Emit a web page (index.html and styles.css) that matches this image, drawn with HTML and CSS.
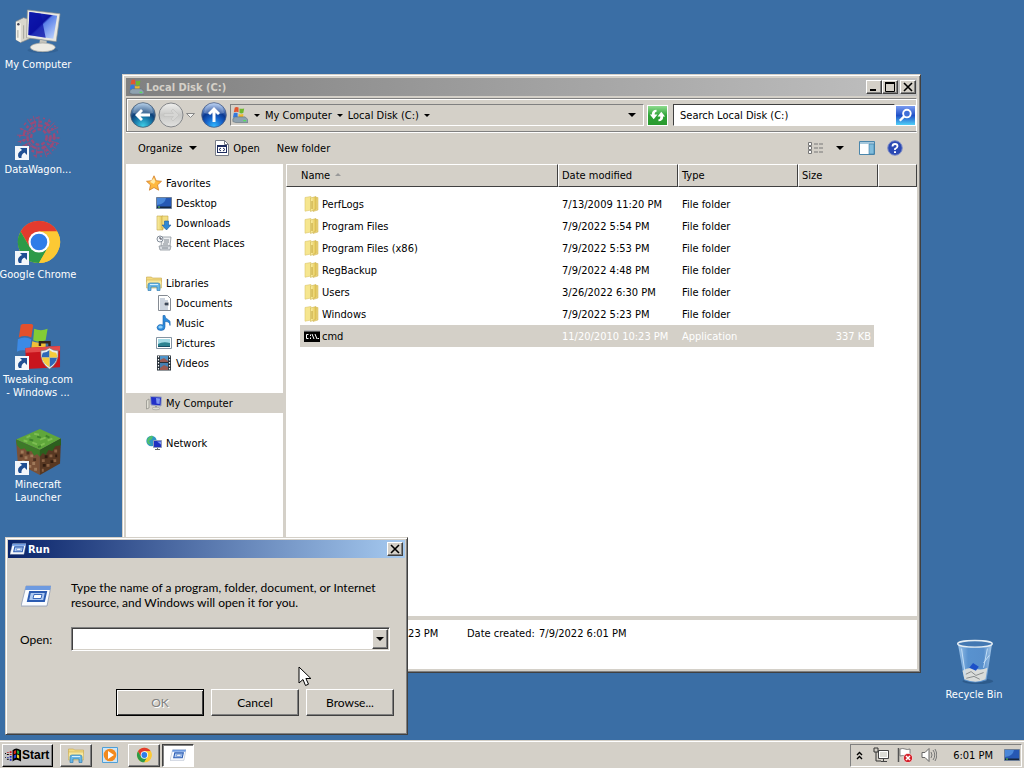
FILE: index.html
```html
<!DOCTYPE html>
<html lang="en">
<head>
  <meta charset="UTF-8" />
  <meta name="viewport" content="width=device-width, initial-scale=1.0"/>
  <title>Desktop</title>
  <link rel="stylesheet" href="styles.css">
</head>
<body>

  <!-- shared icons -->
  <svg class="sprite" aria-hidden="true">
    <defs>
      <linearGradient id="g-screen" x1="0" y1="0" x2="1" y2="1">
        <stop offset="0" stop-color="#1a35c8"/><stop offset=".45" stop-color="#0a12a0"/><stop offset=".5" stop-color="#5a80e8"/><stop offset="1" stop-color="#c8dcff"/>
      </linearGradient>
      <linearGradient id="g-folder" x1="0" y1="0" x2="1" y2="0">
        <stop offset="0" stop-color="#fbf1a8"/><stop offset="1" stop-color="#e2c350"/>
      </linearGradient>
      <radialGradient id="g-back" cx=".5" cy=".95" r=".9">
        <stop offset="0" stop-color="#3fd0e8"/><stop offset=".4" stop-color="#1878a8"/><stop offset=".65" stop-color="#0d3f78"/><stop offset="1" stop-color="#8fb4d8"/>
      </radialGradient>
      <radialGradient id="g-up" cx=".5" cy=".95" r=".9">
        <stop offset="0" stop-color="#30b8ff"/><stop offset=".4" stop-color="#1560c8"/><stop offset=".65" stop-color="#0b3890"/><stop offset="1" stop-color="#98b8e8"/>
      </radialGradient>
      <linearGradient id="g-grey" x1="0" y1="0" x2="0" y2="1">
        <stop offset="0" stop-color="#f0f0ee"/><stop offset=".5" stop-color="#c8c8c6"/><stop offset="1" stop-color="#e2e2e0"/>
      </linearGradient>
      <linearGradient id="g-green" x1="0" y1="0" x2="0" y2="1">
        <stop offset="0" stop-color="#8fdc8f"/><stop offset=".5" stop-color="#2ea336"/><stop offset="1" stop-color="#2a9a2e"/>
      </linearGradient>
      <linearGradient id="g-find" x1="0" y1="0" x2="0" y2="1">
        <stop offset="0" stop-color="#7a9cf0"/><stop offset=".5" stop-color="#2050c8"/><stop offset="1" stop-color="#50d0f8"/>
      </linearGradient>
      <linearGradient id="g-glass" x1="0" y1="0" x2="1" y2="0">
        <stop offset="0" stop-color="#a8cdf0"/><stop offset=".3" stop-color="#5c96d4"/><stop offset=".75" stop-color="#5a92d0"/><stop offset="1" stop-color="#b8d6f2"/>
      </linearGradient>
    </defs>

    <symbol id="i-computer" viewBox="0 0 48 48">
      <ellipse cx="29" cy="43" rx="16" ry="3" fill="#2b527f" opacity=".4"/>
      <path d="M1 13l8-4 6 2v20l-9 4-5-3z" fill="#d9d7cd" stroke="#8c8c88" stroke-width=".7"/>
      <path d="M1 13l5 2v20l-5-3z" fill="#f4f2ea"/>
      <circle cx="3.500" cy="16" r="1.300" fill="#445"/>
      <path d="M3 22v8M9 17v14" stroke="#a5a39b"/>
      <path d="M13 1l34 4-4 29-31-4z" fill="#e9e8e2" stroke="#96968f" stroke-width=".7"/>
      <path d="M15 3l29 4-4 24-26-4z" fill="url(#g-screen)"/>
      <path d="M15 3l12 2 5 25-18-3z" fill="#0b10a4" opacity=".75"/>
      <path d="M26 32l7 1v6h-8z" fill="#c5c4bc"/>
      <ellipse cx="29" cy="40" rx="13" ry="4.500" fill="#ecebe5" stroke="#a3a39d" stroke-width=".7"/>
    </symbol>

    <symbol id="i-wagon" viewBox="0 0 48 48">
      <g fill="none" stroke="#b8406a" stroke-width="2.500" opacity=".75">
        <circle cx="25" cy="24" r="8" stroke-dasharray="4 2"/>
        <circle cx="25" cy="24" r="12" stroke-dasharray="5 2 2 2"/>
        <circle cx="25" cy="24" r="16" stroke-dasharray="3 3 6 3"/>
        <circle cx="25" cy="24" r="20" stroke-dasharray="2 4 3 5" stroke-width="1.500"/>
        <path d="M25 2v12M36 5l-5 11M45 14l-12 5M47 25H34M43 36l-10-6M33 45l-4-12M22 46l1-12M11 40l7-9M3 29l12-3M5 15l12 5M13 5l7 11M19 2l3 11M41 9l-8 8M46 31l-12-4M38 42l-7-9M5 35l11-6M2 22l12 1" stroke-width="1"/>
      </g>
    </symbol>

    <symbol id="i-chrome" viewBox="0 0 48 48">
      <circle cx="25" cy="24" r="22" fill="#fcc934"/>
      <path d="M5.900 13A22 22 0 0 1 44.100 13H25L15.500 29.500z" fill="#e33b2e"/>
      <path d="M5.900 13A22 22 0 0 0 25 46l9.500-16.500L15.500 29.500z" fill="#2d9a48"/>
      <path d="M44.100 13A22 22 0 0 1 25 46l9.500-16.500L25 13z" fill="#fcc934"/>
      <circle cx="25" cy="24" r="11" fill="#fff"/>
      <circle cx="25" cy="24" r="8.700" fill="#2f7de8"/>
    </symbol>

    <symbol id="i-tweak" viewBox="0 0 48 48">
      <path d="M6 1q7-4 13 0l-2 13q-7-3-13 0z" fill="#e2502c"/>
      <path d="M20 5q7 3 14 0l-2 12q-7 3-13 0z" fill="#83cc35"/>
      <path d="M3 16q7-4 14 0l-2 13q-7-3-13 0z" fill="#3c8ae6"/>
      <path d="M18 18q7 3 14 0v8H17z" fill="#f0bf38"/>
      <path d="M26 23v-4h10v4" fill="none" stroke="#33231c" stroke-width="2.500"/>
      <path d="M11 25l36-2v22l-36 2z" fill="#c9151d"/>
      <path d="M11 25l36-2v5l-36 2z" fill="#e34a4a"/>
      <path d="M36 25q4 3 9 3 1 13-9 19-10-6-9-19 5 0 9-3z" fill="#e9ecef" stroke="#777" stroke-width=".7"/>
      <path d="M36 27v8h-8q0-3 1-5 4 0 7-3zM36 35h8q-2 7-8 10z" fill="#2f68b8"/>
      <path d="M36 27q3 3 7 3 1 2 1 5h-8zM28 35h8v10q-6-3-8-10z" fill="#f5cc3c"/>
    </symbol>

    <symbol id="i-grass" viewBox="0 0 48 48">
      <path d="M26 0l22 10-22 12L1 11z" fill="#5fa63b"/>
      <path d="M1 11l25 11v26L3 36z" fill="#7a5137"/>
      <path d="M48 10L26 22v26l21-12z" fill="#583822"/>
      <path d="M1 11l25 11v7l-3-3-3 2-3-5-4 1-3-4-4 1-4-4z" fill="#3d7a28"/>
      <path d="M48 10L26 22v7l3-4 3 2 3-5 4 1 3-5 6-1z" fill="#2c5f1e"/>
      <path d="M12 9l4-2M20 5l5 1M26 11l6-2M18 14l5 2M34 12l5-2M27 17l4-2M9 12l4 1" stroke="#7dbd52" stroke-width="2"/>
      <path d="M15 11l4 1M23 8l4 1M32 7l4 2M24 19l3-1" stroke="#3f842c" stroke-width="2"/>
      <path d="M6 24h3M10 30h3M16 28h3M7 34h3M18 36h3M14 39h3M20 42h3" stroke="#a07a5a" stroke-width="3"/>
      <path d="M5 28h3M12 25h3M19 32h3M12 35h3" stroke="#4a2f1f" stroke-width="3"/>
      <path d="M28 33h3M36 28h3M41 23h3M33 38h3M40 33h3M28 43h2" stroke="#8a6244" stroke-width="3"/>
      <path d="M31 29h3M37 34h3M29 38h3M42 28h2" stroke="#301c10" stroke-width="3"/>
    </symbol>

    <symbol id="i-shortcut" viewBox="0 0 14 14">
      <path d="M0 0h14v14H0z" fill="#f2f6fa"/>
      <path d="M5 2h7v7L9.500 6.500Q6 8 6.500 12H4Q1 7 7 4z" fill="#1f4f93"/>
    </symbol>

    <symbol id="i-bin" viewBox="0 0 48 48">
      <ellipse cx="28" cy="44" rx="16" ry="3" fill="#1f446f" opacity=".45"/>
      <path d="M7 4h36l-6 39q-12 5-23 0z" fill="url(#g-glass)" opacity=".9"/>
      <path d="M12 33q6-4 13-2t13-1l-2 12q-10 5-22 0z" fill="#d9dcda"/>
      <path d="M15 37l6-3 5 4 8-3M16 41l8-2 6 3" stroke="#85898a" fill="none"/>
      <path d="M19 30l4-5 6 4-3 4z" fill="#1c50c8"/>
      <path d="M34 25l6-8M11 10l4 28M38 10l-4 20" stroke="#c6e0f7" fill="none"/>
      <ellipse cx="25" cy="5" rx="18" ry="3.500" fill="#4478b2" stroke="#e6eef4" stroke-width="1.500"/>
    </symbol>

    <symbol id="i-drive" viewBox="0 0 18 18">
      <path d="M4 1q2-1 4 0v5q-2-1-5 0z" fill="#e2552f"/>
      <path d="M9 2q2 1 5 0l-1 5q-2 1-4 0z" fill="#6fb82e"/>
      <path d="M3 7q2-1 4 0v5q-2-1-5 0z" fill="#3478dd"/>
      <path d="M8 8q2 1 5 0v4H8z" fill="#f0b92a"/>
      <path d="M2 13l3-2h10l3 3v3H5l-3-1z" fill="#8fa2b0" stroke="#5c6c79" stroke-width=".6"/>
      <path d="M13 15h3" stroke="#55e05a" stroke-width="1.500"/>
    </symbol>

    <symbol id="i-back" viewBox="0 0 26 26">
      <circle cx="13" cy="13" r="12.300" fill="url(#g-back)" stroke="#4a5c70" stroke-width=".8"/>
      <path d="M3 11a10 10 0 0 1 20 0q-10 3-20 0z" fill="#fff" opacity=".25"/>
      <path d="M11 7l-6 6 6 6 2-2-2.500-2.500H20v-3h-9.500L13 9z" fill="#fff"/>
    </symbol>
    <symbol id="i-forward" viewBox="0 0 26 26">
      <circle cx="13" cy="13" r="12" fill="url(#g-grey)" stroke="#85878a"/>
      <path d="M15 7l6 6-6 6-2-2 2.500-2.500H6v-3h9.500L13 9z" fill="#d6d6d4" stroke="#bcbcba" stroke-width=".5"/>
    </symbol>
    <symbol id="i-up" viewBox="0 0 26 26">
      <circle cx="13" cy="13" r="12.300" fill="url(#g-up)" stroke="#4a5c80" stroke-width=".8"/>
      <path d="M3 11a10 10 0 0 1 20 0q-10 3-20 0z" fill="#fff" opacity=".25"/>
      <path d="M7 11l6-6 6 6-2 2-2.500-2.500V20h-3v-9.500L9 13z" fill="#fff"/>
    </symbol>
    <symbol id="i-refresh" viewBox="0 0 20 20">
      <path d="M0 0h20v20H0z" fill="url(#g-green)"/>
      <path d="M9 4v2q-2 0-2 3h3l-4 5-4-5h2q0-5 5-5zM11 16v-2q2 0 2-3h-3l4-5 4 5h-2q0 5-5 5z" fill="#fff"/>
    </symbol>
    <symbol id="i-find" viewBox="0 0 20 20">
      <path d="M0 0h20v20H0z" fill="url(#g-find)"/>
      <circle cx="11.500" cy="8" r="4" fill="#4070d8" stroke="#fff" stroke-width="2"/>
      <path d="M8.500 11L4 15.500" stroke="#fff" stroke-width="2.500"/>
    </symbol>
    <symbol id="i-app" viewBox="0 0 14 16">
      <path d="M.5.500h9l4 4v11H.5z" fill="#fff" stroke="#777c88"/>
      <path d="M9.500.500v4h4" fill="none" stroke="#777c88"/>
      <path d="M2 5h10v8H2z" fill="#1d2b5e"/>
      <path d="M3 7h8v5H3z" fill="#fff"/>
      <path d="M6 8l-2 1.500L6 11M8 8l2 1.500L8 11" fill="none" stroke="#1d2b5e"/>
    </symbol>
    <symbol id="i-views" viewBox="0 0 16 12">
      <path d="M.5.500h3v3h-3zM.5 4.500h3v3h-3zM.5 8.500h3v3h-3z" fill="#fff" stroke="#777"/>
      <path d="M6 2h4M11 2h4M6 6h4M11 6h4M6 10h4M11 10h4" stroke="#777"/>
    </symbol>
    <symbol id="i-pane" viewBox="0 0 16 14">
      <path d="M.5.500h15v13H.5z" fill="#fff" stroke="#4b86ab"/>
      <path d="M1 1h14v2H1z" fill="#a6c8dc"/>
      <path d="M10 3h5v10h-5z" fill="#7fbcdc" stroke="#3a7ba3" stroke-width=".6"/>
    </symbol>
    <symbol id="i-help" viewBox="0 0 16 16">
      <circle cx="8" cy="8" r="7.300" fill="#2b49b4" stroke="#8492c8"/>
      <path d="M5.500 6.500Q5.500 4 8 4t2.500 2.200Q10.500 7.500 8 9v1" fill="none" stroke="#fff" stroke-width="1.800"/>
      <path d="M7 11.300h2v1.700H7z" fill="#fff"/>
    </symbol>

    <symbol id="i-star" viewBox="0 0 16 16">
      <path d="M8 .8l2.200 4.900 5.300.6-4 3.600 1.100 5.300L8 12.500l-4.600 2.700 1.100-5.300-4-3.600 5.300-.6z" fill="#ffb83e" stroke="#d07f2b" stroke-width=".8"/>
      <path d="M8 3l1.300 3.600L8 9 4 7z" fill="#ffeaa8"/>
    </symbol>
    <symbol id="i-desktop" viewBox="0 0 16 16">
      <path d="M.5 2.500h15v11H.5z" fill="#2658b4" stroke="#6d7f98"/>
      <path d="M1 3h9q-1 6-9 7z" fill="#5a9be8" opacity=".7"/>
      <path d="M1 11.500h14v1.500H1z" fill="#16263f"/>
      <path d="M2 12h2" stroke="#5ad25a"/>
    </symbol>
    <symbol id="i-downloads" viewBox="0 0 16 16">
      <path d="M1 1h6v14H1z" fill="url(#g-folder)" stroke="#c4a548" stroke-width=".6"/>
      <path d="M6 1h6v12H6z" fill="#f3de82" stroke="#c4a548" stroke-width=".6"/>
      <path d="M8.500 6h4v4H15l-4.500 5L6 10h2.500z" fill="#2f88d4" stroke="#1b5c9f" stroke-width=".6"/>
    </symbol>
    <symbol id="i-recent" viewBox="0 0 16 16">
      <path d="M6 2h9l-1 9H5z" fill="#eef0f2" stroke="#8d949c" stroke-width=".8"/>
      <path d="M3 11h12l-1 4H4z" fill="#d9dde2" stroke="#8d949c" stroke-width=".8"/>
      <path d="M8 5h5M8 7h5M7 9h5M6 13h6" stroke="#7f868e"/>
      <circle cx="4" cy="4" r="3" fill="#f5f8fb" stroke="#858e99"/>
      <path d="M4 2v2h2" fill="none" stroke="#445"/>
    </symbol>
    <symbol id="i-libs" viewBox="0 0 16 16">
      <path d="M.5 4V2h5l1 1h9v4H.5z" fill="#f3db80" stroke="#c6a449" stroke-width=".6"/>
      <path d="M.5 5h15v8H.5z" fill="#f8e89c" stroke="#cdae55" stroke-width=".6"/>
      <path d="M2 15.500V10q0-2 2-2h8q2 0 2 2v5.500h-3V12H5v3.500z" fill="#68b6e4" stroke="#3580b4" stroke-width=".7"/>
      <path d="M4 9.500h8" stroke="#d6f0ff"/>
    </symbol>
    <symbol id="i-doc" viewBox="0 0 16 16">
      <path d="M2.500.500h9l3 3v12h-12z" fill="#fff" stroke="#858b93"/>
      <path d="M4 4h5M4 6h8M4 8h4M4 10h4M4 12h8M4 14h8" stroke="#7e93ac" stroke-width=".8"/>
      <path d="M8.500 7.500h4v3h-4z" fill="#3b4758"/>
    </symbol>
    <symbol id="i-music" viewBox="0 0 16 16">
      <path d="M7 .5h2q0 3 3 4t2 6q0-4-5-4V12q0 3.500-4 3.500T1 12.500q1-4 6-2.500z" fill="#2d8bdc" stroke="#1a62ab" stroke-width=".6"/>
      <ellipse cx="4.500" cy="12" rx="2.200" ry="1.500" fill="#8fd0f8"/>
    </symbol>
    <symbol id="i-pics" viewBox="0 0 16 16">
      <path d="M.5 2.500h15v11H.5z" fill="#fff" stroke="#8594a2"/>
      <path d="M2 4h12v8H2z" fill="#a4dbe6"/>
      <path d="M2 9q5-3 12-1v4H2z" fill="#2b8290"/>
      <path d="M2 11h12v1H2z" fill="#164e66"/>
    </symbol>
    <symbol id="i-video" viewBox="0 0 16 16">
      <path d="M1 .5h14v15H1z" fill="#273039"/>
      <path d="M4 1h8v6H4z" fill="#4f94c9"/>
      <path d="M4 8h8v7H4z" fill="#4580b2"/>
      <path d="M4 5l4-2 4 3v1H4zM4 13l4-3 4 2v3H4z" fill="#9a5a52"/>
      <path d="M2.500 1v14M13.500 1v14" stroke="#fff" stroke-width="1.200" stroke-dasharray="1.500 1.500"/>
    </symbol>
    <symbol id="i-pc" viewBox="0 0 16 16">
      <path d="M.5 5.500L3 4v9l-2.500 1z" fill="#e2e0d6" stroke="#8b8b84" stroke-width=".7"/>
      <path d="M4.500 1.500l11 .5-.5 9-10-1z" fill="#2230c8" stroke="#9fa8bd"/>
      <path d="M10 3l4 .5-.5 5.500-3-.5z" fill="#7d94f0"/>
      <path d="M9 11h2v2H9z" fill="#999"/>
      <ellipse cx="10" cy="13.500" rx="4" ry="1.300" fill="#dddcd4" stroke="#9a9a94" stroke-width=".6"/>
    </symbol>
    <symbol id="i-network" viewBox="0 0 16 16">
      <circle cx="5.500" cy="6" r="5.200" fill="#2f96c4"/>
      <path d="M2 3q3-3 5-2l-1 3-3 2 2 4-3-1Q0 6 2 3z" fill="#4fc06d"/>
      <path d="M7.500 5.500h8v7h-8z" fill="#1e2fc0" stroke="#8f9bb8"/>
      <path d="M11 6.500h4v3z" fill="#7e98f2"/>
      <path d="M9 14.500h5M11.500 13v1" stroke="#666"/>
    </symbol>
    <symbol id="i-folder" viewBox="0 0 16 16">
      <path d="M1 1.500L7 .5V14l-6 1.200z" fill="#f6e68f" stroke="#dcc66d" stroke-width=".6"/>
      <path d="M12 1.500h2V14l-5 1.500z" fill="#ead27a" stroke="#cfb551" stroke-width=".5"/>
      <path d="M6.500 2L12 .5V13l-5.500 2.500z" fill="url(#g-folder)" stroke="#cfb551" stroke-width=".6"/>
      <path d="M8 5v8" stroke="#bfa037"/>
    </symbol>
    <symbol id="i-cmd" viewBox="0 0 16 12">
      <path d="M0 0h16v12H0z" fill="#000"/>
      <path d="M0 0h16v1.500H0z" fill="#b5b5b5"/>
      <path d="M4.500 4.500h-2v4h2M6.500 4.500v1.500M6.500 7.500v1.500M8 4l2 5M11 4l2 5M13.500 8.500h1.500" fill="none" stroke="#fff"/>
    </symbol>
    <symbol id="i-run" viewBox="0 0 30 22">
      <path d="M5 1h25l-4 20H0z" fill="#fafcff" stroke="#8e9bb3" stroke-width=".8"/>
      <path d="M5 1h25l-1 4H4z" fill="#6d9ae0"/>
      <path d="M9 7h16l-2 9H7z" fill="#aecaf2" stroke="#2c5cb2" stroke-width="2"/>
      <path d="M13 9.500h8l-1 4h-8z" fill="#fff" stroke="#3b69ba"/>
    </symbol>
    <symbol id="i-media" viewBox="0 0 16 16">
      <path d="M.5.500h15v15H.5z" fill="#cfe5f5" stroke="#4ea0d8"/>
      <circle cx="8" cy="8" r="6.300" fill="#f28a1e"/>
      <path d="M6 4l6 4-6 4z" fill="#fff"/>
    </symbol>
    <symbol id="i-start" viewBox="0 0 18 16">
      <path d="M8 3q2-2 4-2t5 2v12q-3-2-5-2t-4 2z" fill="#000"/>
      <path d="M9.300 4Q10.500 3 11.700 3v3.500Q10.500 6.500 9.300 7.500z" fill="#e02a1c"/>
      <path d="M12.600 3q1.200 0 2.400 1v3.500q-1.200-1-2.400-1z" fill="#25a23b"/>
      <path d="M9.300 8.500q1.200-1 2.400-1V11q-1.200 0-2.400 1z" fill="#2443d6"/>
      <path d="M12.600 7.500q1.200 0 2.400 1V12q-1.200-1-2.400-1z" fill="#f0d12c"/>
      <path d="M5 4h2v2H5zM5 7h2v1H5zM2 5h2v1H2z" fill="#c21d1d"/>
      <path d="M5 9h2v2H5zM5 12h2v2H5zM2 10h2v1H2z" fill="#2030b8"/>
      <path d="M2 7h2v1H2zM0 6h1v1H0zM2 12h2v1H2zM0 10h1v1H0z" fill="#000"/>
    </symbol>
    <symbol id="i-net" viewBox="0 0 16 16">
      <path d="M5.500 3.500h10v8h-10z" fill="#dcdcd6" stroke="#444"/>
      <path d="M6.500 4.500h8v6h-8z" fill="none" stroke="#fff"/>
      <path d="M8 14.500h6M10.500 12v2" stroke="#444"/>
      <path d="M1 1v4h4V1M3 5v9h5M2 0v2M4 0v2" fill="none" stroke="#333"/>
    </symbol>
    <symbol id="i-alert" viewBox="0 0 16 16">
      <path d="M1.500 1v14" stroke="#555" stroke-width="1.500"/>
      <path d="M3 2q3-1 5 0t5 0v7q-3 1-5 0t-5 0z" fill="#fff" stroke="#666" stroke-width=".8"/>
      <circle cx="11" cy="11" r="4.600" fill="#d4202a" stroke="#fff" stroke-width=".6"/>
      <path d="M9 9l4 4M13 9l-4 4" stroke="#fff" stroke-width="1.500"/>
    </symbol>
    <symbol id="i-sound" viewBox="0 0 16 16">
      <path d="M1 5.500h3l4-4v13l-4-4H1z" fill="#fff" stroke="#666"/>
      <path d="M10 5q2 3 0 6M12 3q3.500 5 0 10M14 2q3.500 6 0 12" fill="none" stroke="#777"/>
    </symbol>
  </svg>

  <main class="desktop">
    <nav class="shortcuts">
      <a class="shortcut" href="#"><span class="shortcut-icon"><svg><use href="#i-computer"/></svg></span>My Computer</a>
      <a class="shortcut" href="#"><span class="shortcut-icon"><svg><use href="#i-wagon"/></svg><svg class="arrow"><use href="#i-shortcut"/></svg></span>DataWagon...</a>
      <a class="shortcut" href="#"><span class="shortcut-icon"><svg><use href="#i-chrome"/></svg><svg class="arrow"><use href="#i-shortcut"/></svg></span>Google Chrome</a>
      <a class="shortcut" href="#"><span class="shortcut-icon"><svg><use href="#i-tweak"/></svg><svg class="arrow"><use href="#i-shortcut"/></svg></span>Tweaking.com<br>- Windows ...</a>
      <a class="shortcut" href="#"><span class="shortcut-icon"><svg><use href="#i-grass"/></svg><svg class="arrow"><use href="#i-shortcut"/></svg></span>Minecraft<br>Launcher</a>
    </nav>
    <a class="shortcut recycle" href="#"><span class="shortcut-icon"><svg><use href="#i-bin"/></svg></span>Recycle Bin</a>

    <!-- Explorer -->
    <section class="window explorer">
      <header class="titlebar inactive">
        <svg class="ico"><use href="#i-drive"/></svg>
        <h1>Local Disk (C:)</h1>
        <button class="caption" aria-label="Minimize"><svg viewBox="0 0 10 10"><path d="M1 8h6" stroke="#000" stroke-width="2"/></svg></button>
        <button class="caption" aria-label="Maximize"><svg viewBox="0 0 10 10"><path d="M.5 1v8.500h9V1" fill="none" stroke="#000"/><path d="M0 1h10" stroke="#000" stroke-width="2"/></svg></button>
        <button class="caption close" aria-label="Close"><svg viewBox="0 0 10 10"><path d="M1 1l8 8M9 1L1 9" stroke="#000" stroke-width="1.600"/></svg></button>
      </header>

      <div class="navbar">
        <button class="round" aria-label="Back"><svg><use href="#i-back"/></svg></button>
        <button class="round" aria-label="Forward"><svg><use href="#i-forward"/></svg></button>
        <button class="history" aria-label="Recent pages"><svg viewBox="0 0 9 5"><path d="M.5.500h8l-4 4z" fill="#f4f4f2" stroke="#888"/></svg></button>
        <button class="round" aria-label="Up"><svg><use href="#i-up"/></svg></button>
        <div class="address">
          <svg class="drive"><use href="#i-drive"/></svg>
          <i class="down"></i>
          <button class="crumb">My Computer</button>
          <i class="down"></i>
          <button class="crumb">Local Disk (C:)</button>
          <i class="down"></i>
          <button class="open-list" aria-label="Previous locations"><i class="down big"></i></button>
        </div>
        <button class="square" aria-label="Refresh"><svg><use href="#i-refresh"/></svg></button>
        <input class="search" type="text" aria-label="Search" placeholder="Search Local Disk (C:)">
        <button class="square find" aria-label="Start search"><svg><use href="#i-find"/></svg></button>
      </div>

      <div class="toolbar">
        <button class="organize">Organize <i class="down big"></i></button>
        <button class="open"><svg><use href="#i-app"/></svg>Open</button>
        <button>New folder</button>
        <button class="views" aria-label="Views"><svg><use href="#i-views"/></svg><i class="down big"></i></button>
        <button class="pane" aria-label="Preview pane"><svg><use href="#i-pane"/></svg></button>
        <button class="help" aria-label="Help"><svg><use href="#i-help"/></svg></button>
      </div>

      <div class="content">
        <nav class="sidebar">
          <ul>
            <li><a href="#"><svg><use href="#i-star"/></svg>Favorites</a></li>
            <li class="sub"><a href="#"><svg><use href="#i-desktop"/></svg>Desktop</a></li>
            <li class="sub"><a href="#"><svg><use href="#i-downloads"/></svg>Downloads</a></li>
            <li class="sub"><a href="#"><svg><use href="#i-recent"/></svg>Recent Places</a></li>
          </ul>
          <ul>
            <li><a href="#"><svg><use href="#i-libs"/></svg>Libraries</a></li>
            <li class="sub"><a href="#"><svg><use href="#i-doc"/></svg>Documents</a></li>
            <li class="sub"><a href="#"><svg><use href="#i-music"/></svg>Music</a></li>
            <li class="sub"><a href="#"><svg><use href="#i-pics"/></svg>Pictures</a></li>
            <li class="sub"><a href="#"><svg><use href="#i-video"/></svg>Videos</a></li>
          </ul>
          <ul>
            <li class="current"><a href="#"><svg><use href="#i-pc"/></svg>My Computer</a></li>
          </ul>
          <ul>
            <li><a href="#"><svg><use href="#i-network"/></svg>Network</a></li>
          </ul>
        </nav>

        <div class="files">
          <table>
            <colgroup><col class="c-name"><col class="c-date"><col class="c-type"><col class="c-size"><col></colgroup>
            <thead>
              <tr><th>Name <i class="sorted"></i></th><th>Date modified</th><th>Type</th><th>Size</th><th></th></tr>
            </thead>
            <tbody>
              <tr><td><span><svg><use href="#i-folder"/></svg>PerfLogs</span></td><td><span>7/13/2009 11:20 PM</span></td><td><span>File folder</span></td><td></td><td></td></tr>
              <tr><td><span><svg><use href="#i-folder"/></svg>Program Files</span></td><td><span>7/9/2022 5:54 PM</span></td><td><span>File folder</span></td><td></td><td></td></tr>
              <tr><td><span><svg><use href="#i-folder"/></svg>Program Files (x86)</span></td><td><span>7/9/2022 5:53 PM</span></td><td><span>File folder</span></td><td></td><td></td></tr>
              <tr><td><span><svg><use href="#i-folder"/></svg>RegBackup</span></td><td><span>7/9/2022 4:48 PM</span></td><td><span>File folder</span></td><td></td><td></td></tr>
              <tr><td><span><svg><use href="#i-folder"/></svg>Users</span></td><td><span>3/26/2022 6:30 PM</span></td><td><span>File folder</span></td><td></td><td></td></tr>
              <tr><td><span><svg><use href="#i-folder"/></svg>Windows</span></td><td><span>7/9/2022 5:23 PM</span></td><td><span>File folder</span></td><td></td><td></td></tr>
              <tr class="selected"><td><span><svg><use href="#i-cmd"/></svg>cmd</span></td><td><span>11/20/2010 10:23 PM</span></td><td><span>Application</span></td><td><span>337 KB</span></td><td></td></tr>
            </tbody>
          </table>
        </div>
      </div>

      <dl class="details">
        <dt>Date modified:</dt><dd>11/20/2010 10:23 PM</dd>
        <dt>Date created:</dt><dd>7/9/2022 6:01 PM</dd>
      </dl>
    </section>

    <!-- Run dialog -->
    <form class="window run">
      <header class="titlebar">
        <svg class="ico"><use href="#i-run"/></svg>
        <h2>Run</h2>
        <button type="button" class="caption close" aria-label="Close"><svg viewBox="0 0 10 10"><path d="M1 1l8 8M9 1L1 9" stroke="#000" stroke-width="1.600"/></svg></button>
      </header>
      <div class="run-intro">
        <svg><use href="#i-run"/></svg>
        <p>Type the name of a program, folder, document, or Internet<br>resource, and Windows will open it for you.</p>
      </div>
      <div class="run-open">
        <label for="command">Open:</label>
        <div class="combo">
          <input type="text" id="command">
          <button type="button" aria-label="History"><i class="down big"></i></button>
        </div>
      </div>
      <div class="run-buttons">
        <button type="submit" class="default" disabled>OK</button>
        <button type="button">Cancel</button>
        <button type="button">Browse...</button>
      </div>
    </form>

    <svg class="cursor" viewBox="0 0 14 22"><path d="M1 1v16l4-3.500 2.500 6 3-1.300-2.600-5.700h5z" fill="#fff" stroke="#000"/></svg>
  </main>

  <footer class="taskbar">
    <button class="start"><svg><use href="#i-start"/></svg>Start</button>
    <div class="tasks">
      <button class="task" aria-label="Windows Explorer"><svg><use href="#i-libs"/></svg></button>
      <button class="task flat" aria-label="Media Player"><svg><use href="#i-media"/></svg></button>
      <button class="task" aria-label="Google Chrome"><svg><use href="#i-chrome"/></svg></button>
      <button class="task active" aria-label="Run"><svg><use href="#i-run"/></svg></button>
    </div>
    <div class="tray">
      <button class="chevrons" aria-label="Show hidden icons"><svg viewBox="0 0 7 9"><path d="M1 4l2.500-2.500L6 4M1 8l2.500-2.500L6 8" fill="none" stroke="#000" stroke-width="1.400"/></svg></button>
      <svg><use href="#i-net"/></svg>
      <svg><use href="#i-alert"/></svg>
      <svg><use href="#i-sound"/></svg>
      <time>6:01 PM</time>
      <button class="show-desktop" aria-label="Show desktop"><svg><use href="#i-desktop"/></svg></button>
    </div>
  </footer>

</body>
</html>
```

FILE: styles.css
```css
* {
  box-sizing: border-box;
}
body {
  margin: 0;
  height: 100vh;
  display: flex;
  flex-direction: column;
  overflow: hidden;
  background: #3a6ea5;
  color: #000;
  font-family: Tahoma, "DejaVu Sans Condensed", "DejaVu Sans", sans-serif;
  font-size: 11px;
  line-height: 13px;
}
svg {
  display: block;
  flex: none;
  width: 16px;
  height: 16px;
}
.sprite {
  position: absolute;
  width: 0;
  height: 0;
}
button, input {
  font: inherit;
  color: inherit;
}
button {
  display: flex;
  align-items: center;
  padding: 0;
  border: none;
  background: none;
  white-space: nowrap;
}
a {
  color: inherit;
  text-decoration: none;
}
h1, h2, p, ul, dl, dd {
  margin: 0;
  padding: 0;
}
.down {
  flex: none;
  border: 3px solid transparent;
  border-top-color: #000;
  border-bottom: none;
}
.down.big {
  border-width: 4px;
  border-bottom: none;
}

/* desktop */
.desktop {
  position: relative;
  flex: 1;
  display: flex;
  justify-content: space-between;
}
.shortcut {
  display: flex;
  flex-direction: column;
  align-items: center;
  width: 76px;
  height: 105px;
  padding-top: 9px;
  color: #fff;
  text-align: center;
  white-space: nowrap;
}
.shortcut-icon {
  position: relative;
  margin-bottom: 3px;
}
.shortcut-icon svg {
  width: 46px;
  height: 46px;
}
.shortcut-icon .arrow {
  position: absolute;
  left: 0;
  bottom: 0;
  width: 14px;
  height: 14px;
}
.recycle {
  align-self: flex-end;
  margin: 0 12px 5px 0;
}

/* windows */
.window {
  position: absolute;
  display: flex;
  flex-direction: column;
  padding: 2px;
  background: #d4d0c8;
  border: 1px solid;
  border-color: #d4d0c8 #404040 #404040 #d4d0c8;
  box-shadow: inset 1px 1px #fff, inset -1px -1px #808080;
}
.titlebar {
  display: flex;
  align-items: center;
  height: 18px;
  padding: 0 2px;
  background: linear-gradient(to right, #0a246a, #a6caf0);
  color: #fff;
}
.titlebar.inactive {
  padding-right: 1px;
  background: linear-gradient(to right, #808080, #c0c0c0);
  color: #d4d0c8;
}
.titlebar h1, .titlebar h2 {
  flex: 1;
  padding-left: 2px;
  font-family: Tahoma, "DejaVu Sans Condensed", "DejaVu Sans", sans-serif;
  font-size: 11px;
}
.caption {
  justify-content: center;
  width: 16px;
  height: 14px;
  background: #d4d0c8;
  border: 1px solid;
  border-color: #fff #404040 #404040 #fff;
  box-shadow: inset -1px -1px #808080;
}
.caption svg {
  width: 10px;
  height: 10px;
}
.caption + .close {
  margin-left: 2px;
}

/* explorer */
.explorer {
  left: 122px;
  right: 103px;
  top: 74px;
  bottom: 67px;
  padding: 3px;
}
.navbar {
  display: flex;
  align-items: center;
  height: 34px;
  margin-top: 2px;
  padding: 0 0 0 3px;
  border: 1px solid;
  border-color: #808080 #fff #808080 #808080;
  box-shadow: inset 1px 1px #fff, 0 1px #fff;
}
.round svg {
  width: 26px;
  height: 26px;
}
.round + .round {
  margin-left: 2px;
}
.history {
  margin: 0 6px 0 2px;
}
.history svg {
  width: 9px;
  height: 5px;
}
.address {
  flex: 1;
  display: flex;
  align-items: center;
  height: 22px;
  margin: 0 3px;
  border: 1px solid;
  border-color: #808080 #fff #fff #808080;
}
.address .drive {
  width: 17px;
  height: 18px;
  margin-right: 6px;
}
.crumb {
  padding: 0 5px;
}
.open-list {
  margin: 0 7px 0 auto;
}
.square {
  border: 1px solid #fff;
}
.square svg {
  width: 19px;
  height: 19px;
}
.search {
  width: 222px;
  height: 22px;
  margin-left: 5px;
  padding: 0 6px;
  background: #fff;
  border: 1px solid;
  border-color: #404040 #fff #fff #404040;
}
.search::placeholder {
  color: #000;
  opacity: 1;
}
.toolbar {
  display: flex;
  align-items: center;
  height: 32px;
  padding: 0 14px 0 12px;
}
.organize .down {
  margin: 0 18px 0 7px;
}
.open svg {
  width: 14px;
  margin-right: 4px;
}
.open {
  margin-right: 17px;
}
.views {
  margin-left: auto;
}
.views svg {
  height: 12px;
  margin-right: 12px;
}
.pane {
  margin: 0 12px 0 15px;
}
.pane svg {
  height: 14px;
}
.content {
  flex: 1;
  display: flex;
  min-height: 0;
}
.sidebar {
  width: 157px;
  padding-top: 9px;
  background: #fff;
}
.sidebar ul {
  margin-bottom: 20px;
  list-style: none;
}
.sidebar a {
  display: flex;
  align-items: center;
  gap: 4px;
  height: 20px;
  padding-left: 20px;
}
.sidebar .sub a {
  padding-left: 30px;
}
.sidebar .current {
  background: #d4d0c8;
}
.files {
  flex: 1;
  margin-left: 3px;
  background: #fff;
}
.files table {
  width: 100%;
  table-layout: fixed;
  border-collapse: separate;
  border-spacing: 0;
}
.c-name {
  width: 272px;
}
.c-date, .c-type {
  width: 120px;
}
.c-size {
  width: 80px;
}
.files th {
  height: 23px;
  padding: 0 3px;
  background: #d4d0c8;
  border: 1px solid;
  border-color: #fff #404040 #404040 #fff;
  font-weight: normal;
  text-align: left;
}
.files th:first-child {
  padding-left: 14px;
}
.sorted {
  display: inline-block;
  margin: 0 0 3px 2px;
  border: 3px solid transparent;
  border-bottom-color: #999;
  border-top: none;
}
.files tbody::before {
  content: "";
  display: block;
  height: 6px;
}
.files td {
  height: 22px;
  padding: 0;
}
.files td span {
  display: flex;
  align-items: center;
  height: 22px;
  padding-left: 4px;
}
.files td:first-child span {
  gap: 2px;
  margin-left: 14px;
}
.files td:nth-child(4) span {
  justify-content: flex-end;
  margin-right: 4px;
  padding-right: 3px;
}
.selected span {
  background: #d4d0c8;
  color: #fff;
}
.selected td:first-child span {
  color: #000;
}
.selected svg {
  height: 12px;
}
.details {
  display: grid;
  grid-template-columns: 72px 135px 72px auto;
  align-content: start;
  height: 49px;
  margin-top: 4px;
  padding: 7px 0 0 134px;
  background: #fff;
}

/* run dialog */
.run {
  left: 5px;
  bottom: 5px;
  width: 403px;
  height: 198px;
  font-family: Lato, "Open Sans", sans-serif;
  font-size: 12px;
  line-height: 15px;
}
.run .titlebar .ico {
  height: 12px;
}
.run-intro {
  display: flex;
  gap: 20px;
  margin: 22px 0 0 13px;
  white-space: nowrap;
}
.run-intro svg {
  width: 30px;
  height: 22px;
  margin-top: 5px;
}
.run-open {
  display: flex;
  align-items: center;
  margin: 17px 15px 0 12px;
}
.run-open label {
  width: 51px;
}
.combo {
  flex: 1;
  display: flex;
  height: 24px;
  background: #fff;
  border: 1px solid;
  border-color: #808080 #fff #fff #808080;
  box-shadow: inset 1px 1px #404040, inset -1px -1px #d4d0c8;
  padding: 1px;
}
.combo input {
  flex: 1;
  min-width: 0;
  border: none;
  background: none;
}
.combo button {
  justify-content: center;
  width: 16px;
  background: #d4d0c8;
  border: 1px solid;
  border-color: #fff #404040 #404040 #fff;
  box-shadow: inset -1px -1px #808080;
}
.run-buttons {
  display: flex;
  justify-content: flex-end;
  gap: 7px;
  margin: 38px 11px 0 0;
}
.run-buttons button {
  justify-content: center;
  width: 88px;
  height: 27px;
  border: 1px solid;
  border-color: #fff #404040 #404040 #fff;
  box-shadow: inset -1px -1px #808080;
}
.run-buttons .default {
  border-color: #000;
  box-shadow: inset 1px 1px #fff, inset -1px -1px #404040;
}
.run-buttons button:disabled {
  color: #808080;
  text-shadow: 1px 1px #fff;
}
.cursor {
  position: absolute;
  left: 298px;
  top: 666px;
  width: 14px;
  height: 22px;
  pointer-events: none;
}

/* taskbar */
.taskbar {
  display: flex;
  align-items: center;
  height: 28px;
  padding: 2px 2px 0;
  background: #d4d0c8;
  box-shadow: inset 0 1px #d4d0c8, inset 0 2px #fff;
}
.start, .task {
  height: 23px;
  border: 1px solid;
  border-color: #fff #404040 #404040 #fff;
  box-shadow: inset -1px -1px #808080;
}
.start {
  width: 51px;
  padding-left: 2px;
  background: #c3c3c3;
  border-color: #fff #000 #000 #fff;
  font-family: "Liberation Sans", Arial, sans-serif;
  font-size: 12px;
  font-weight: bold;
}
.start svg {
  width: 17px;
}
.tasks {
  flex: 1;
  display: flex;
  gap: 2px;
  margin-left: 7px;
}
.task {
  justify-content: center;
  width: 32px;
}
.task.flat {
  border-color: transparent;
  box-shadow: none;
}
.task.active {
  background: #fff;
  border-color: #404040 #fff #fff #404040;
  box-shadow: inset 1px 1px #808080;
}
.task.active svg {
  height: 12px;
}
.tray {
  display: flex;
  align-items: center;
  gap: 8px;
  height: 23px;
  padding: 0 1px 0 5px;
  border: 1px solid;
  border-color: #808080 #fff #fff #808080;
}
.chevrons svg {
  width: 7px;
  height: 9px;
}
.chevrons {
  margin-right: 2px;
}
.tray time {
  margin: 0 3px 0 8px;
}
```
